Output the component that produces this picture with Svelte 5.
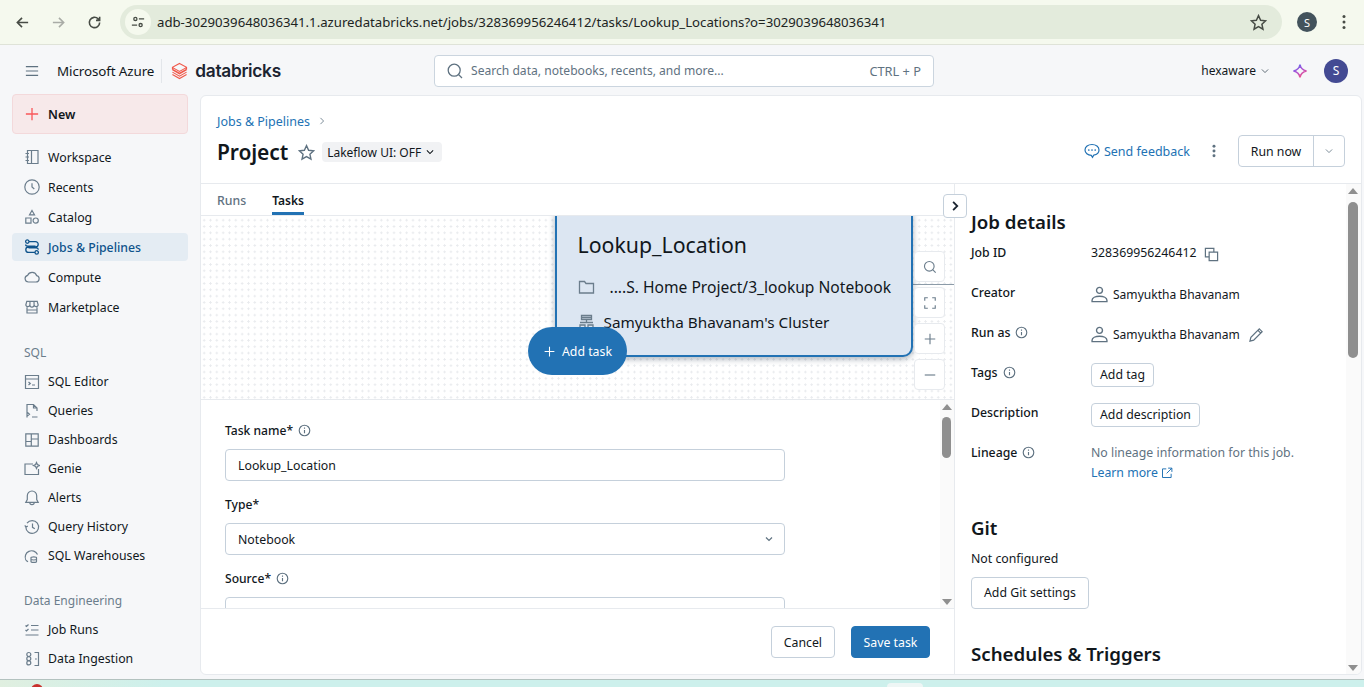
<script lang="ts">
	const primary = [
		{ label: 'Workspace', icon: 'workspace' },
		{ label: 'Recents', icon: 'recents' },
		{ label: 'Catalog', icon: 'catalog' },
		{ label: 'Jobs & Pipelines', icon: 'jobs', active: true },
		{ label: 'Compute', icon: 'compute' },
		{ label: 'Marketplace', icon: 'market' }
	];
	const sql = [
		{ label: 'SQL Editor', icon: 'editor' },
		{ label: 'Queries', icon: 'queries' },
		{ label: 'Dashboards', icon: 'dash' },
		{ label: 'Genie', icon: 'genie' },
		{ label: 'Alerts', icon: 'bell' },
		{ label: 'Query History', icon: 'history' },
		{ label: 'SQL Warehouses', icon: 'warehouse' }
	];
	const eng = [
		{ label: 'Job Runs', icon: 'runs' },
		{ label: 'Data Ingestion', icon: 'ingest' }
	];
	const iconPaths: Record<string, string> = {
		workspace: 'M3.5 1.5h10.500v13H3.500zM7.500 1.500v13M1.500 4.500h3.500M1.500 8h3.500M1.500 11.500h3.500',
		recents: 'M8 .8a7.200 7.200 0 1 0 0 14.400A7.200 7.200 0 0 0 8 .8zM8 4.200V8l2.300 2',
		catalog: 'M8 1.500l2.500 4.300h-5zM1.800 9h5.200v5.200H1.800zM11.700 9a2.600 2.600 0 1 0 0 5.200 2.600 2.600 0 0 0 0-5.200z',
		jobs: 'M3.300 .9a1.700 1.700 0 1 0 0 3.400 1.700 1.700 0 0 0 0-3.400zM5 2.600h6.500a2.700 2.700 0 0 1 0 5.400h-7a2.700 2.700 0 0 0 0 5.400H11M1.600 5.500c0 1 1 1.600 2.400 1.600h7.500M4.500 8.900H12c1.300 0 2.300.7 2.400 1.700M12.700 11.700a1.700 1.700 0 1 0 0 3.400 1.700 1.700 0 0 0 0-3.400z',
		compute: 'M4.500 13h7.500a3.200 3.200 0 0 0 .7-6.300A4.800 4.800 0 0 0 3.700 6.300 3.400 3.400 0 0 0 4.500 13z',
		market: 'M1.800 6l1-3.700h10.400L14.200 6a2.100 2.100 0 0 1-4.100 0 2.100 2.100 0 0 1-4.200 0 2.100 2.100 0 0 1-4.100 0zM3 8.200v5.800h10V8.200M3 11h10M6 2.300L5.900 6M10 2.300l.1 3.700',
		editor: 'M1.500 1.500h13v13h-13zM1.500 5h13M4.500 8l1.800 1.500L4.500 11M8 11h3',
		queries: 'M3 14.500V1.500h6.500l3.500 3.500v3M9.500 1.500v3.500H13M3.500 9.500l2 1.700-2 1.700M8 14h5.500',
		dash: 'M1.800 1.800h12.400v12.400H1.800zM7.300 1.800v12.400M7.300 7h6.900M1.800 9.500h5.500',
		genie: 'M14.500 8v5.500H1V3h8M12.500 1.500l.9 2.100 2.100.9-2.100.9-.9 2.100-.9-2.100-2.100-.9 2.100-.9z',
		bell: 'M8 1a4.700 4.700 0 0 0-4.700 4.700v3.800L1.800 12.300h12.400L12.700 9.500V5.700A4.700 4.700 0 0 0 8 1zM5.800 12.500a2.200 2.200 0 0 0 4.400 0',
		history: 'M3 4.200A6.400 6.400 0 1 1 1.800 8M.8 6.300l1.200 1.800 1.800-1.200M8.500 4.500V8.300l2.300 1.500',
		warehouse: 'M1.800 12A6 6 0 0 1 13.500 6.500M1.800 12.300l2.200 1.500M7 9.700c0-1.200 5.500-1.200 5.500 0v3.800c0 1.200-5.500 1.200-5.500 0zM7 11.400c1 .8 4.500.8 5.500 0',
		runs: 'M1.500 3.500l1 1 2-2M7 3.500h7.500M1.500 8l1 1 2-2M7 8h7.500M1.500 13h13',
		ingest: 'M4.800 1.500a2 2 0 1 0 0 4 2 2 0 0 0 0-4zM4.800 5.700a2 2 0 1 0 0 4 2 2 0 0 0 0-4zM4.800 9.900a2 2 0 1 0 0 4 2 2 0 0 0 0-4zM10.500 1.500h4v13h-4M11 8h1.800'
	};
	const person = 'M8 1.300a2.800 2.800 0 1 0 0 5.600 2.800 2.800 0 0 0 0-5.600zM1 14.700v-1.200c0-2.300 3.200-3.800 7-3.800s7 1.500 7 3.800v1.200z';
</script>

{#snippet navItem(item)}
	<a class="nav-item" class:active={item.active} href="#top">
		<svg viewBox="0 0 16 16" class="nav-icon"><path d={iconPaths[item.icon]} /></svg>
		<span>{item.label}</span>
	</a>
{/snippet}

{#snippet info()}
	<svg viewBox="0 0 16 16" class="info"><circle cx="8" cy="8" r="6.500" /><path d="M8 7.300v4M8 4.400v1.400" /></svg>
{/snippet}

<div class="page">
	<header class="chrome">
		<svg class="c-icon" viewBox="0 0 16 16"><path d="M14 8H2.500M7.500 3l-5 5 5 5" /></svg>
		<svg class="c-icon faded" viewBox="0 0 16 16"><path d="M2 8h11.500M8.500 3l5 5-5 5" /></svg>
		<svg class="c-icon" viewBox="0 0 16 16"><path d="M13.500 8a5.500 5.500 0 1 1-1.600-3.900L13.500 5.700M13.500 1.800v3.900H9.600" /></svg>
		<div class="omnibox">
			<span class="site-btn">
				<svg viewBox="0 0 16 16"><circle cx="5" cy="4.500" r="1.800" /><path d="M9 4.500h6M1 11.500h6" /><circle cx="11" cy="11.500" r="1.800" /></svg>
			</span>
			<span class="url">adb-3029039648036341.1.azuredatabricks.net/jobs/328369956246412/tasks/Lookup_Locations?o=3029039648036341</span>
			<svg class="bookmark" viewBox="0 0 16 16"><path d="M8 1.500l2 4.400 4.700.5-3.500 3.200 1 4.700L8 11.900l-4.200 2.400 1-4.700-3.500-3.200 4.700-.5z" /></svg>
		</div>
		<span class="chrome-avatar">S</span>
		<svg class="kebab" viewBox="0 0 4 16"><circle cx="2" cy="2.500" r="1.500" /><circle cx="2" cy="8" r="1.500" /><circle cx="2" cy="13.500" r="1.500" /></svg>
	</header>

	<div class="app-bar">
		<div class="brand">
			<svg class="burger" viewBox="0 0 16 16"><path d="M1 3h14M1 8h14M1 13h14" /></svg>
			<span class="azure">Microsoft Azure</span>
			<span class="brand-rule"></span>
			<svg class="logo" viewBox="0 0 18 18"><path d="M9 1l7.500 4.200v2L9 11.400 1.500 7.200v-2zM1.500 7.700L9 12l7.500-4.300M1.500 10.200L9 14.500l7.500-4.300M1.500 12.700L9 17l7.500-4.300M1.800 5.400L9 9.400l7.200-4" /></svg>
			<span class="wordmark">databricks</span>
		</div>
		<div class="search">
			<svg viewBox="0 0 16 16"><circle cx="7.200" cy="7.200" r="6" /><path d="M11.500 11.500l3.500 3.500" /></svg>
			<span class="placeholder">Search data, notebooks, recents, and more...</span>
			<span class="shortcut">CTRL + P</span>
		</div>
		<div class="account">
			<span class="workspace-name">hexaware</span>
			<svg class="chev" viewBox="0 0 16 16"><path d="M3 5.500l5 5 5-5" /></svg>
			<svg class="spark" viewBox="0 0 16 16">
				<defs>
					<linearGradient id="spark-grad" x1="0" y1="0" x2="0.600" y2="1">
						<stop offset="0" stop-color="#4a6cf0" />
						<stop offset="0.500" stop-color="#a855d8" />
						<stop offset="1" stop-color="#f0508a" />
					</linearGradient>
				</defs>
				<path d="M8 1.500c.6 3.800 2.200 5.600 6.500 6.500-4.300.9-5.900 2.700-6.500 6.500-.6-3.800-2.200-5.600-6.500-6.500 4.300-.9 5.900-2.700 6.500-6.500z" />
			</svg>
			<span class="avatar">S</span>
		</div>
	</div>

	<div class="body">
		<aside class="sidebar">
			<button class="new-btn" type="button">
				<svg viewBox="0 0 16 16"><path d="M8 1v14M1 8h14" /></svg>
				New
			</button>
			<nav class="nav-primary">
				{#each primary as item}
					{@render navItem(item)}
				{/each}
			</nav>
			<div class="nav-title first">SQL</div>
			<nav class="nav-tight">
				{#each sql as item}
					{@render navItem(item)}
				{/each}
			</nav>
			<div class="nav-title">Data Engineering</div>
			<nav class="nav-tight">
				{#each eng as item}
					{@render navItem(item)}
				{/each}
			</nav>
		</aside>

		<main class="card">
			<section class="head">
				<div class="crumb"><span>Jobs &amp; Pipelines</span><svg viewBox="0 0 16 16"><path d="M5.500 3l5 5-5 5" /></svg></div>
				<div class="title-row">
					<h1>Project</h1>
					<svg class="star" viewBox="0 0 16 16"><path d="M8 1.500l2 4.400 4.700.5-3.500 3.200 1 4.700L8 11.900l-4.200 2.400 1-4.700-3.500-3.200 4.700-.5z" /></svg>
					<span class="pill">Lakeflow UI: OFF <svg viewBox="0 0 16 16"><path d="M3 5.500l5 5 5-5" /></svg></span>
					<span class="grow"></span>
					<a class="feedback" href="#top">
						<svg viewBox="0 0 16 16"><path d="M8 1.500c-3.900 0-7 2.400-7 5.500 0 2.900 2.800 5.200 6.300 5.400l1.200 2 1.200-2.200c3-.6 5.300-2.700 5.300-5.200 0-3.100-3.100-5.500-7-5.500z" /><path class="dots" d="M4.800 7h.01M8 7h.01M11.200 7h.01" /></svg>
						Send feedback
					</a>
					<svg class="more" viewBox="0 0 4 16"><circle cx="2" cy="2.500" r="1.700" /><circle cx="2" cy="8" r="1.700" /><circle cx="2" cy="13.500" r="1.700" /></svg>
					<div class="split">
						<span class="split-main">Run now</span>
						<span class="split-arrow"><svg viewBox="0 0 16 16"><path d="M3 5.500l5 5 5-5" /></svg></span>
					</div>
				</div>
			</section>

			<section class="columns">
				<div class="left">
					<div class="tabs">
						<span class="tab">Runs</span>
						<span class="tab on">Tasks</span>
					</div>
					<div class="canvas">
						<div class="task-node">
							<div class="node-title">Lookup_Location</div>
							<div class="node-row path">
								<svg viewBox="0 0 16 16"><path d="M1 2.500h5l1.500 2H15v9.500H1z" /></svg>
								<span>....S. Home Project/3_lookup Notebook</span>
							</div>
							<div class="node-row cluster">
								<svg viewBox="0 0 16 16"><path d="M3 1.500h10v4H3zM3 3.500h10M8 5.500v3M1.500 8.500h13M1.500 11h5v3.500h-5zM9.500 11h5v3.500h-5z" /></svg>
								<span>Samyuktha Bhavanam's Cluster</span>
							</div>
						</div>
						<button class="add-task" type="button">
							<svg viewBox="0 0 16 16"><path d="M8 2v12M2 8h12" /></svg>
							Add task
						</button>
						<div class="zoom-tools">
							<span><svg viewBox="0 0 16 16"><circle cx="7.200" cy="7.200" r="5.500" /><path d="M11 11l3.500 3.500" /></svg></span>
							<span><svg viewBox="0 0 16 16"><path d="M2 5.500V2h3.500M10.500 2H14v3.500M14 10.500V14h-3.500M5.500 14H2v-3.500" /></svg></span>
							<span><svg viewBox="0 0 16 16"><path d="M8 2v12M2 8h12" /></svg></span>
							<span><svg viewBox="0 0 16 16"><path d="M2 8h12" /></svg></span>
						</div>
					</div>
					<div class="form-wrap">
						<form class="form">
							<div class="label first">Task name* {@render info()}</div>
							<div class="input">Lookup_Location</div>
							<div class="label">Type*</div>
							<div class="input select">Notebook <svg viewBox="0 0 16 16"><path d="M4 6l4 4 4-4" /></svg></div>
							<div class="label">Source* {@render info()}</div>
							<div class="input">Workspace</div>
						</form>
						<div class="scroll small">
							<i class="arrow up"></i>
							<i class="thumb"></i>
							<i class="arrow down"></i>
						</div>
					</div>
					<div class="actions">
						<button class="btn" type="button">Cancel</button>
						<button class="btn save" type="button">Save task</button>
					</div>
				</div>

				<div class="right">
					<button class="collapse" type="button"><svg viewBox="0 0 16 16"><path d="M5.500 2.500L11 8l-5.500 5.500" /></svg></button>
					<div class="details">
						<h2 class="first-h">Job details</h2>
						<dl>
							<dt>Job ID</dt>
							<dd>328369956246412 <svg class="copy" viewBox="0 0 16 16"><path d="M5.500 5.500h9v9h-9zM10.500 5.500V1.500h-9v9h4" /></svg></dd>
							<dt>Creator</dt>
							<dd class="user"><svg class="person" viewBox="0 0 16 16"><path d={person} /></svg>Samyuktha Bhavanam</dd>
							<dt>Run as {@render info()}</dt>
							<dd class="user"><svg class="person" viewBox="0 0 16 16"><path d={person} /></svg>Samyuktha Bhavanam <svg class="pencil" viewBox="0 0 16 16"><path d="M11 2l3 3-9 9-4 1 1-4zM9.500 3.500l3 3" /></svg></dd>
							<dt>Tags {@render info()}</dt>
							<dd><span class="mini">Add tag</span></dd>
							<dt>Description</dt>
							<dd><span class="mini">Add description</span></dd>
							<dt>Lineage {@render info()}</dt>
							<dd class="lineage">
								<span>No lineage information for this job.</span>
								<a href="#top">Learn more <svg viewBox="0 0 16 16"><path d="M7 2.500H2v11.500h11.500V9M9.500 1.500h5v5M14.500 1.500L7.500 8.500" /></svg></a>
							</dd>
						</dl>
						<h2 class="git">Git</h2>
						<p>Not configured</p>
						<span class="git-btn">Add Git settings</span>
						<h2 class="sched">Schedules &amp; Triggers</h2>
					</div>
					<div class="scroll large">
						<i class="arrow up"></i>
						<i class="thumb"></i>
						<i class="arrow down"></i>
					</div>
				</div>
			</section>
		</main>
	</div>
	<div class="taskbar">
		<i class="tray-red"></i>
		<i class="tray-white"></i>
	</div>
</div>

<style>
	:global(body) {
		margin: 0;
		overflow: hidden;
		background: #f6f7f9;
	}

	.page {
		width: 1364px;
		height: 687px;
		display: flex;
		flex-direction: column;
		overflow: hidden;
		font-family: 'Noto Sans', 'Open Sans', sans-serif;
		font-size: 12.300px;
		color: #11171c;
		background: #f6f7f9;
	}

	svg {
		fill: none;
		stroke: currentColor;
		stroke-width: 1.300;
		flex: none;
	}

	/* browser chrome */
	.chrome {
		height: 45px;
		flex: none;
		box-sizing: border-box;
		background: #f5f9ee;
		border-bottom: 1px solid #dfe3d8;
		display: flex;
		align-items: center;
		padding: 0 14px 0 15px;
		color: #474c45;
	}

	.c-icon {
		width: 15px;
		height: 15px;
		margin-right: 21px;
		stroke-width: 1.700;
	}

	.c-icon.faded {
		color: #a9aca6;
	}

	.omnibox {
		width: 1162px;
		height: 34px;
		flex: none;
		margin-left: -3px;
		border-radius: 17px;
		background: #e3ebdc;
		display: flex;
		align-items: center;
		padding: 0 15px 0 5px;
		box-sizing: border-box;
	}

	.site-btn {
		width: 26px;
		height: 26px;
		border-radius: 50%;
		background: #f5f9ee;
		display: flex;
		align-items: center;
		justify-content: center;
	}

	.site-btn svg {
		width: 14px;
		height: 14px;
		stroke-width: 1.500;
	}

	.url {
		margin-left: 6px;
		font-size: 13.200px;
		color: #20241f;
		flex: 1;
		white-space: nowrap;
	}

	.bookmark {
		width: 17px;
		height: 17px;
		stroke-width: 1.400;
	}

	.chrome-avatar {
		width: 20px;
		height: 20px;
		flex: none;
		margin-left: 15px;
		border-radius: 50%;
		background: #43535c;
		color: #fff;
		font-size: 11px;
		display: flex;
		align-items: center;
		justify-content: center;
	}

	.kebab {
		width: 4px;
		height: 16px;
		margin-left: 25px;
		fill: currentColor;
		stroke: none;
	}

	/* app bar */
	.app-bar {
		height: 50px;
		flex: none;
		display: flex;
		align-items: center;
		padding-top: 1px;
		box-sizing: border-box;
		position: relative;
	}

	.brand {
		width: 434px;
		display: flex;
		align-items: center;
		flex: none;
	}

	.burger {
		width: 14px;
		height: 14px;
		margin-left: 25px;
		color: #5f7281;
		stroke-width: 1.400;
	}

	.azure {
		margin-left: 18px;
		font-size: 13.400px;
		white-space: nowrap;
		letter-spacing: -0.100px;
	}

	.brand-rule {
		width: 1px;
		height: 24px;
		margin-left: 7px;
		background: #e3e6ea;
	}

	.logo {
		width: 17px;
		height: 18px;
		margin-left: 9px;
		color: #f0584a;
		stroke-width: 1.100;
	}

	.wordmark {
		margin-left: 7px;
		font-family: 'Inter', sans-serif;
		font-size: 17.300px;
		font-weight: 600;
		letter-spacing: -0.300px;
		color: #1b2431;
	}

	.search {
		width: 500px;
		height: 32px;
		flex: none;
		box-sizing: border-box;
		background: #fff;
		border: 1px solid #cbd5df;
		border-radius: 4px;
		display: flex;
		align-items: center;
		padding: 0 12px;
		color: #5f7281;
	}

	.search svg {
		width: 16px;
		height: 16px;
		margin-right: 8px;
	}

	.placeholder {
		flex: 1;
		font-size: 12.100px;
	}

	.shortcut {
		font-size: 12.800px;
	}

	.account {
		margin-left: auto;
		display: flex;
		align-items: center;
		padding-right: 16px;
	}

	.workspace-name {
		font-size: 12px;
	}

	.chev {
		width: 10px;
		height: 10px;
		margin-left: 4px;
		margin-right: -1px;
		color: #3f4e5a;
	}

	.spark {
		width: 16px;
		height: 16px;
		margin-left: 23px;
		stroke: url(#spark-grad);
		stroke-width: 1.600;
	}

	.avatar {
		width: 24px;
		height: 24px;
		margin-left: 16px;
		border-radius: 50%;
		background: #434a93;
		color: #fff;
		font-size: 12px;
		display: flex;
		align-items: center;
		justify-content: center;
	}

	/* sidebar */
	.body {
		flex: 1;
		display: flex;
		min-height: 0;
	}

	.sidebar {
		width: 200px;
		flex: none;
		box-sizing: border-box;
		padding: 0 12px;
		margin-top: -1px;
	}

	.new-btn {
		width: 176px;
		height: 40px;
		display: flex;
		align-items: center;
		padding: 0 12px;
		font: inherit;
		font-size: 12.500px;
		font-weight: 600;
		color: #11171c;
		background: #f7e9ea;
		border: 1px solid #f3d9db;
		border-radius: 4px;
		margin-bottom: 9px;
	}

	.new-btn svg {
		width: 14px;
		height: 14px;
		margin-right: 9px;
		color: #f9575a;
		stroke-width: 1.500;
	}

	.nav-item {
		display: flex;
		align-items: center;
		height: 28px;
		padding: 0 8px 0 12px;
		margin-bottom: 2px;
		border-radius: 4px;
		color: #11171c;
		text-decoration: none;
		white-space: nowrap;
	}

	.nav-item.active {
		background: #e4ecf3;
		color: #0e538b;
		font-weight: 500;
	}

	.nav-icon {
		width: 16px;
		height: 16px;
		margin-right: 8px;
		color: #6b7d8c;
		stroke-width: 1.200;
	}

	.active .nav-icon {
		color: #0e538b;
		stroke-width: 1.300;
	}

	.nav-tight .nav-item {
		height: 27px;
		margin-bottom: 2px;
	}

	.nav-title {
		color: #6b7d8c;
		font-size: 12px;
		height: 16px;
		line-height: 16px;
		margin: 24px 0 7px 12px;
	}

	.nav-title.first {
		margin-top: 24px;
	}

	/* main card */
	.card {
		width: 1162px;
		height: 580px;
		flex: none;
		box-sizing: border-box;
		background: #fff;
		border: 1px solid #e7eaee;
		border-radius: 6px;
		display: flex;
		flex-direction: column;
		overflow: hidden;
	}

	.head {
		height: 88px;
		flex: none;
		box-sizing: border-box;
		padding: 16px 16px 0;
		border-bottom: 1px solid #e7eaee;
	}

	.crumb {
		display: flex;
		align-items: center;
		color: #2272b4;
		height: 18px;
		font-size: 12.500px;
	}

	.crumb svg {
		width: 10px;
		height: 10px;
		margin-left: 7px;
		color: #5f7281;
	}

	.title-row {
		display: flex;
		align-items: center;
		height: 34px;
		margin-top: 5px;
	}

	h1 {
		font-size: 21px;
		font-weight: 600;
		margin: 0;
		letter-spacing: -0.100px;
	}

	.star {
		width: 17px;
		height: 17px;
		margin-left: 10px;
		color: #5f7281;
		stroke-width: 1.300;
	}

	.pill {
		margin-left: 7px;
		height: 20px;
		padding: 0 7px 0 5px;
		display: flex;
		align-items: center;
		gap: 4px;
		background: #f1f2f4;
		border-radius: 4px;
		font-size: 12px;
		white-space: nowrap;
	}

	.pill svg {
		width: 10px;
		height: 10px;
		stroke-width: 1.800;
	}

	.grow {
		flex: 1;
	}

	.feedback {
		display: flex;
		align-items: center;
		color: #2272b4;
		text-decoration: none;
		gap: 4px;
		margin-top: -2px;
		font-size: 12.500px;
	}

	.feedback svg {
		width: 16px;
		height: 16px;
		stroke-width: 1.200;
	}

	.feedback .dots {
		stroke-width: 1.700;
		stroke-linecap: round;
	}

	.more {
		width: 4px;
		height: 14px;
		margin: -2px 22px 0 22px;
		fill: #5f7281;
		stroke: none;
	}

	.split {
		width: 107px;
		height: 32px;
		display: flex;
		box-sizing: border-box;
		border: 1px solid #c5d0db;
		border-radius: 4px;
		flex: none;
		margin-top: -2px;
	}

	.split-main {
		flex: 1;
		display: flex;
		align-items: center;
		justify-content: center;
	}

	.split-arrow {
		width: 30px;
		border-left: 1px solid #c5d0db;
		display: flex;
		align-items: center;
		justify-content: center;
		color: #5f7281;
	}

	.split-arrow svg {
		width: 10px;
		height: 10px;
	}

	/* columns */
	.columns {
		flex: 1;
		display: flex;
		min-height: 0;
	}

	.left {
		width: 753px;
		flex: none;
		display: flex;
		flex-direction: column;
		min-height: 0;
		border-right: 1px solid #e7eaee;
		box-sizing: content-box;
	}

	.tabs {
		height: 32px;
		flex: none;
		box-sizing: border-box;
		display: flex;
		gap: 25px;
		padding-left: 16px;
		border-bottom: 1px solid #e7eaee;
	}

	.tab {
		height: 31px;
		line-height: 33px;
		color: #5f7281;
		box-sizing: border-box;
		font-weight: 500;
	}

	.tab.on {
		color: #11171c;
		font-weight: 600;
		font-size: 12px;
		margin-left: 1px;
		border-bottom: 3px solid #2272b4;
	}

	.canvas {
		height: 183px;
		flex: none;
		position: relative;
		overflow: hidden;
		border-bottom: 1px solid #e7eaee;
		background-color: #fff;
		background-image: radial-gradient(circle, #e9ebee 1px, transparent 1.200px);
		background-size: 6.330px 6.330px;
		background-position: 0 1px;
	}

	.canvas::after {
		content: '';
		position: absolute;
		left: 712px;
		right: 0;
		top: 68px;
		height: 1px;
		background: #8c9ba8;
	}

	.task-node {
		position: absolute;
		left: 354px;
		top: -10px;
		width: 358px;
		height: 151px;
		box-sizing: border-box;
		background: #dce6f2;
		border: 2.500px solid #2272b4;
		border-radius: 10px;
		box-shadow: 0 2px 6px rgba(40, 60, 80, 0.4);
		padding: 22px 0 0 20.500px;
		font-size: 15.300px;
		z-index: 1;
	}

	.node-title {
		font-size: 21.300px;
		line-height: 30px;
	}

	.node-row {
		display: flex;
		align-items: center;
		white-space: nowrap;
		line-height: 20px;
	}

	.node-row svg {
		width: 17px;
		height: 16px;
		color: #6b7d8c;
	}

	.node-row.path {
		margin-top: 17px;
		gap: 15px;
		font-size: 15.600px;
	}

	.node-row.cluster {
		margin-top: 15px;
		gap: 9px;
	}

	.add-task {
		position: absolute;
		left: 327px;
		top: 111px;
		width: 99px;
		height: 48px;
		z-index: 2;
		border: none;
		border-radius: 24px;
		background: #2272b4;
		color: #fff;
		font: inherit;
		display: flex;
		align-items: center;
		justify-content: center;
		gap: 6px;
	}

	.add-task svg {
		width: 13px;
		height: 13px;
	}

	.zoom-tools {
		position: absolute;
		left: 713px;
		top: 35px;
		z-index: 2;
		display: flex;
		flex-direction: column;
		gap: 5px;
	}

	.zoom-tools span {
		width: 31px;
		height: 31px;
		box-sizing: border-box;
		background: #fff;
		border: 1px solid #e7eaee;
		border-radius: 4px;
		display: flex;
		align-items: center;
		justify-content: center;
		color: #6b7d8c;
	}

	.zoom-tools svg {
		width: 14px;
		height: 14px;
	}

	/* form */
	.form-wrap {
		flex: 1;
		min-height: 0;
		display: flex;
		position: relative;
		overflow: hidden;
	}

	.form {
		flex: 1;
		padding: 0 24px;
		min-width: 0;
	}

	.label {
		display: flex;
		align-items: center;
		gap: 5px;
		height: 18px;
		font-size: 12.100px;
		font-weight: 500;
		margin-top: 14px;
		margin-bottom: 10px;
	}

	.label.first {
		margin-top: 21px;
		margin-bottom: 10px;
	}

	.info {
		width: 13px;
		height: 13px;
		color: #5f7281;
		stroke-width: 1.400;
	}

	.input {
		width: 560px;
		height: 32px;
		box-sizing: border-box;
		border: 1px solid #c5d0db;
		border-radius: 4px;
		padding: 0 12px;
		display: flex;
		align-items: center;
		justify-content: space-between;
	}

	.input.select svg {
		width: 12px;
		height: 12px;
		margin-right: -3px;
		color: #5f7281;
		stroke-width: 1.600;
	}

	.scroll {
		width: 15px;
		flex: none;
		position: relative;
		background: #fafafa;
	}

	.scroll.small {
		width: 14px;
		height: 100%;
	}

	.scroll .thumb {
		position: absolute;
		left: 2px;
		width: 10px;
		border-radius: 5px;
		background: #8f8f8f;
	}

	.scroll.small .thumb {
		top: 17px;
		height: 41px;
		left: 2px;
		width: 9px;
	}

	.scroll.large .thumb {
		top: 18px;
		height: 156px;
	}

	.arrow {
		position: absolute;
		left: 2px;
		width: 0;
		height: 0;
		border-left: 5px solid transparent;
		border-right: 5px solid transparent;
	}

	.arrow.up {
		top: 4px;
		border-bottom: 6px solid #8f8f8f;
	}

	.arrow.down {
		bottom: 3px;
		border-top: 6px solid #8f8f8f;
	}

	.actions {
		height: 66px;
		flex: none;
		box-sizing: border-box;
		border-top: 1px solid #e7eaee;
		display: flex;
		justify-content: flex-end;
		align-items: flex-start;
		gap: 16px;
		padding: 17px 24px 0 0;
	}

	.btn {
		height: 32px;
		padding: 0 12px;
		font: inherit;
		background: #fff;
		color: #11171c;
		border: 1px solid #c5d0db;
		border-radius: 4px;
	}

	.btn.save {
		width: 79px;
		padding: 0;
		background: #2272b4;
		border-color: #2272b4;
		color: #fff;
	}

	/* details */
	.right {
		flex: 1;
		min-width: 0;
		display: flex;
		position: relative;
	}

	.collapse {
		position: absolute;
		left: -12px;
		top: 10px;
		width: 24px;
		height: 24px;
		padding: 0;
		z-index: 3;
		background: #fff;
		border: 1px solid #c5d0db;
		border-radius: 4px;
		display: flex;
		align-items: center;
		justify-content: center;
	}

	.collapse svg {
		width: 12px;
		height: 12px;
		stroke-width: 2.400;
		color: #1b2431;
	}

	.details {
		flex: 1;
		min-width: 0;
		padding: 26px 0 0 16px;
		overflow: hidden;
	}

	h2 {
		font-size: 18.700px;
		font-weight: 600;
		line-height: 24px;
		margin: 0;
	}

	dl {
		display: grid;
		grid-template-columns: 120px 1fr;
		grid-auto-rows: 40px;
		margin: 10px 0 0;
	}

	dt {
		display: flex;
		align-items: flex-start;
		gap: 5px;
		font-weight: 500;
		line-height: 18px;
		height: 18px;
	}

	dt .info {
		margin-top: 2px;
	}

	dd {
		margin: 0;
		display: flex;
		align-items: flex-start;
		line-height: 18px;
		white-space: nowrap;
	}

	dd.user {
		padding-top: 2px;
		font-size: 12.050px;
	}

	.copy {
		width: 15px;
		height: 15px;
		margin: 3px 0 0 7px;
		color: #5f7281;
	}

	.person {
		width: 17px;
		height: 17px;
		margin: 0 5px 0 0;
		color: #5f7281;
		stroke-width: 1.300;
	}

	.pencil {
		width: 15px;
		height: 15px;
		margin: 1px 0 0 9px;
		color: #5f7281;
	}

	.mini {
		margin-top: -1px;
		height: 24px;
		box-sizing: border-box;
		padding: 0 8px;
		line-height: 22px;
		border: 1px solid #c5d0db;
		border-radius: 4px;
	}

	.lineage {
		flex-direction: column;
		gap: 2px;
		color: #5f7281;
	}

	.lineage a {
		color: #2272b4;
		text-decoration: none;
		display: flex;
		align-items: center;
		gap: 3px;
	}

	.lineage a svg {
		width: 12px;
		height: 12px;
	}

	.git {
		margin-top: 32px;
	}

	p {
		margin: 10px 0 9px;
		line-height: 18px;
	}

	.git-btn {
		display: inline-block;
		height: 32px;
		box-sizing: border-box;
		line-height: 30px;
		padding: 0 12px;
		border: 1px solid #c5d0db;
		border-radius: 4px;
	}

	.sched {
		margin-top: 33px;
	}

	.taskbar {
		height: 8px;
		flex: none;
		margin-top: -8px;
		box-sizing: border-box;
		background: linear-gradient(90deg, #e0efe0 0, #cdf0ec 12%, #cdf0ec 100%);
		border-top: 1px solid #b3c2bf;
		position: relative;
		overflow: hidden;
	}

	.tray-red {
		position: absolute;
		left: 31px;
		top: 4px;
		width: 12px;
		height: 12px;
		border-radius: 50%;
		background: #c8302c;
	}

	.tray-white {
		position: absolute;
		left: 887px;
		top: 3px;
		width: 36px;
		height: 8px;
		border-radius: 4px 4px 0 0;
		background: #eef6f5;
	}
</style>
